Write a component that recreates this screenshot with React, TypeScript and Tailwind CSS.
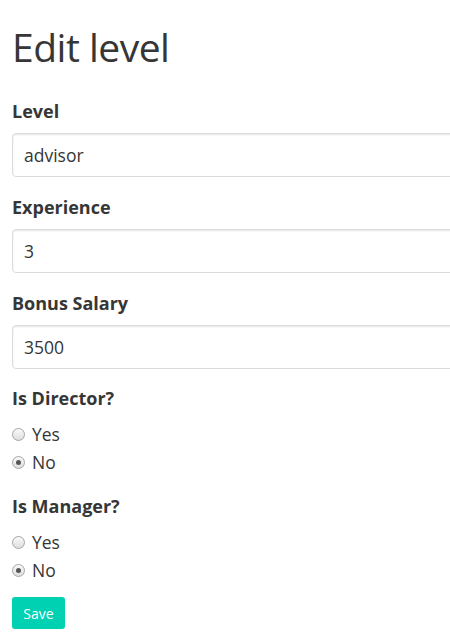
export default function App() {
  const groups = [
    { label: "Level", value: "advisor" },
    { label: "Experience", value: "3" },
    { label: "Bonus Salary", value: "3500" },
  ];

  return (
    <div className="w-[450px] h-[644px] overflow-hidden bg-white pl-3 pt-[23px] font-['Open_Sans',sans-serif] text-[#363636]">
      <h1 className="text-[39px] leading-[48px] text-[#363636] tracking-[-0.5px]">Edit level</h1>

      <div className="mt-[27px]">
        {groups.map((g, i) => (
          <div key={g.label} className={i > 0 ? "mt-[17px]" : ""}>
            <label className="block text-[18px] leading-[26px] font-bold">{g.label}</label>
            <div className="mt-[9px] w-[460px] h-[44px] rounded-[4px] border border-[#dbdbdb] shadow-[inset_0_1px_2px_rgba(10,10,10,0.1)] flex items-center px-[11px] text-[17.5px] text-[#363636]">
              {g.value}
            </div>
          </div>
        ))}
      </div>

      {["Is Director?", "Is Manager?"].map((q, i) => (
        <div key={q} className={i === 0 ? "mt-[16px]" : "mt-[17px]"}>
          <label className="block text-[18px] leading-[26px] font-bold">{q}</label>
          <div className="mt-[9px]">
            {["Yes", "No"].map((opt) => (
              <div key={opt} className="flex items-center h-[28px] text-[17.5px] text-[#363636]">
                <span className="w-[13px] h-[13px] rounded-full border border-[#a5a5a5] bg-gradient-to-b from-[#fafafa] to-[#dedede] flex items-center justify-center">
                  {opt === "No" && <span className="w-[5px] h-[5px] rounded-full bg-[#555]" />}
                </span>
                <span className="ml-[7px]">{opt}</span>
              </div>
            ))}
          </div>
        </div>
      ))}

      <button className="mt-[13px] w-[53px] h-[32px] rounded-[3px] bg-[#00d1b2] text-white text-[14px] flex items-center justify-center">
        Save
      </button>
    </div>
  );
}
